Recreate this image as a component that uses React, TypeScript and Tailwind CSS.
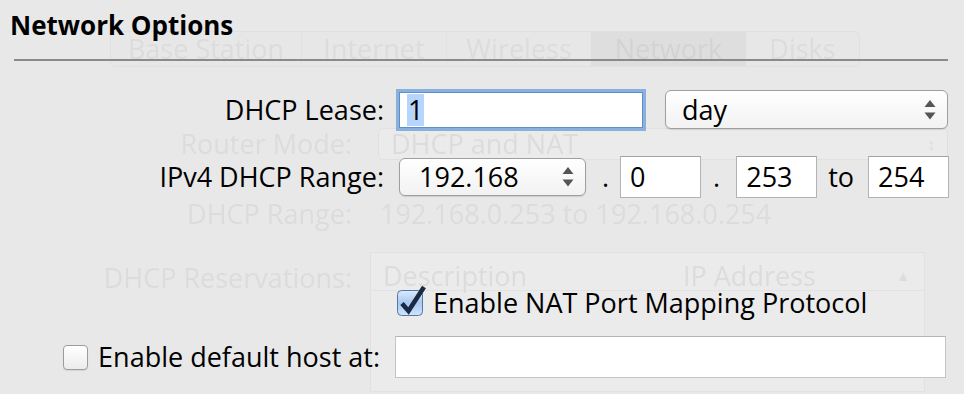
import React from "react";

function Arrows({ className = "" }: { className?: string }) {
  return (
    <svg width="12" height="20" viewBox="0 0 12 20" className={className}>
      <polygon points="6,0 11.5,7 0.5,7" fill="#555" />
      <polygon points="0.5,12.5 11.5,12.5 6,19.5" fill="#555" />
    </svg>
  );
}

function CheckedBox() {
  return (
    <svg width="30" height="32" viewBox="0 0 30 32" className="shrink-0">
      <defs>
        <linearGradient id="cb" x1="0" y1="0" x2="0" y2="1">
          <stop offset="0" stopColor="#dbeafc" />
          <stop offset="0.5" stopColor="#a9c9f1" />
          <stop offset="1" stopColor="#cfe3fb" />
        </linearGradient>
      </defs>
      <rect x="0.5" y="6.5" width="25" height="25" rx="4" fill="url(#cb)" stroke="#5577a3" />
      <path d="M5 19.5 L11.5 27 L27 3" fill="none" stroke="#1b2a44" strokeWidth="4.6" strokeLinejoin="miter" />
    </svg>
  );
}

function UncheckedBox() {
  return (
    <div className="w-[25px] h-[25px] rounded-[4px] border border-[#9c9c9c] bg-gradient-to-b from-[#ffffff] to-[#ececec] shadow-[0_1px_1px_rgba(0,0,0,0.08)] shrink-0" />
  );
}

function Ghost() {
  return (
    <div className="col-start-1 row-start-1 flex flex-col text-[#dcdcdc] blur-[0.6px]">
      <div className="mt-[31px] ml-[110px] w-[750px] h-[36px] flex border border-[#e0e0e0] rounded-[5px] bg-[#e7e7e7]">
        <div className="w-[190px] flex items-center justify-center">Base Station</div>
        <div className="w-[145px] flex items-center justify-center border-l border-[#e2e2e2]">Internet</div>
        <div className="w-[145px] flex items-center justify-center border-l border-[#e2e2e2]">Wireless</div>
        <div className="w-[155px] flex items-center justify-center bg-[#dedede] text-[#d3d3d3]">Network</div>
        <div className="flex-1 flex items-center justify-center">Disks</div>
      </div>
      <div className="mt-[61px] flex items-center h-[32px]">
        <div className="w-[352px] text-right">Router Mode:</div>
        <div className="ml-[26px] w-[570px] h-[32px] rounded-[5px] border border-[#e0e0e0] bg-[#ebebeb] flex items-center px-[12px] justify-between">
          <span>DHCP and NAT</span>
          <span className="text-[16px]">↕</span>
        </div>
      </div>
      <div className="mt-[38px] flex items-center h-[32px]">
        <div className="w-[352px] text-right">DHCP Range:</div>
        <div className="ml-[28px]">192.168.0.253 to 192.168.0.254</div>
      </div>
      <div className="mt-[22px] flex items-start">
        <div className="w-[352px] text-right mt-[10px]">DHCP Reservations:</div>
        <div className="ml-[18px] w-[555px] h-[140px] border border-[#e1e1e1] bg-[#ebebeb]">
          <div className="flex h-[30px] items-center border-b border-[#e3e3e3] mt-[8px]">
            <div className="w-[300px] pl-[12px]">Description</div>
            <div className="flex-1 pl-[12px]">IP Address</div>
            <div className="pr-[14px] text-[14px]">▲</div>
          </div>
        </div>
      </div>
    </div>
  );
}

export default function App() {
  return (
    <div className="w-[964px] h-[394px] overflow-hidden grid bg-[#e8e8e8] font-['Open_Sans',sans-serif] text-[27px] leading-[32px]">
      <Ghost />
      <div className="col-start-1 row-start-1 relative z-[1] flex flex-col text-black">
        <div className="pl-[10px] pt-[9px] text-[26px] font-bold leading-[32px]">Network Options</div>
        <div className="ml-[14px] mr-[16px] mt-[18px] h-[2px] bg-[#8a8a8a]" />
        <div className="grid grid-cols-[384px_1fr] mt-[29px]">
          {/* Row 1 */}
          <div className="h-[39px] flex items-center justify-end">DHCP Lease:</div>
          <div className="h-[39px] flex items-center pl-[15px]">
            <div className="w-[244px] h-[36px] bg-white border border-[#5f8fcb] shadow-[0_0_0_3px_#8ab0e0] flex items-center pl-[7px]">
              <span className="bg-[#b5d5fd] px-[1px]">1</span>
            </div>
            <div className="ml-[22px] w-[283px] h-[39px] rounded-[6px] border border-[#9f9f9f] bg-gradient-to-b from-white to-[#f2f2f2] shadow-[0_1px_1px_rgba(0,0,0,0.12)] flex items-center justify-between pl-[16px] pr-[11px]">
              <span>day</span>
              <Arrows />
            </div>
          </div>

          {/* Row 2 */}
          <div className="mt-[27px] h-[42px] flex items-center justify-end">IPv4 DHCP Range:</div>
          <div className="mt-[27px] h-[42px] flex items-center pl-[15px]">
            <div className="w-[187px] h-[38px] rounded-[6px] border border-[#9f9f9f] bg-gradient-to-b from-white to-[#f2f2f2] shadow-[0_1px_1px_rgba(0,0,0,0.12)] flex items-center justify-between pl-[19px] pr-[11px]">
              <span>192.168</span>
              <Arrows />
            </div>
            <span className="ml-[16px]">.</span>
            <div className="ml-[11px] w-[81px] h-[42px] bg-white border border-[#b3b3b3] border-t-[#a3a3a3] flex items-center pl-[9px]">0</div>
            <span className="ml-[12px]">.</span>
            <div className="ml-[16px] w-[81px] h-[42px] bg-white border border-[#b3b3b3] border-t-[#a3a3a3] flex items-center pl-[9px]">253</div>
            <span className="ml-[11px]">to</span>
            <div className="ml-[14px] w-[81px] h-[42px] bg-white border border-[#b3b3b3] border-t-[#a3a3a3] flex items-center pl-[9px]">254</div>
          </div>

          {/* Row 3 */}
          <div className="mt-[87px] h-[36px]" />
          <div className="mt-[87px] h-[36px] flex items-center pl-[13px]">
            <div className="-mt-[6px]">
              <CheckedBox />
            </div>
            <span className="ml-[6px]">Enable NAT Port Mapping Protocol</span>
          </div>

          {/* Row 4 */}
          <div className="mt-[15px] h-[42px] flex items-center justify-end pr-[4px]">
            <UncheckedBox />
            <span className="ml-[10px]">Enable default host at:</span>
          </div>
          <div className="mt-[15px] h-[42px] flex items-center pl-[11px]">
            <div className="w-[551px] h-[42px] bg-white border border-[#c4c4c4] border-t-[#b5b5b5]" />
          </div>
        </div>
      </div>
    </div>
  );
}
